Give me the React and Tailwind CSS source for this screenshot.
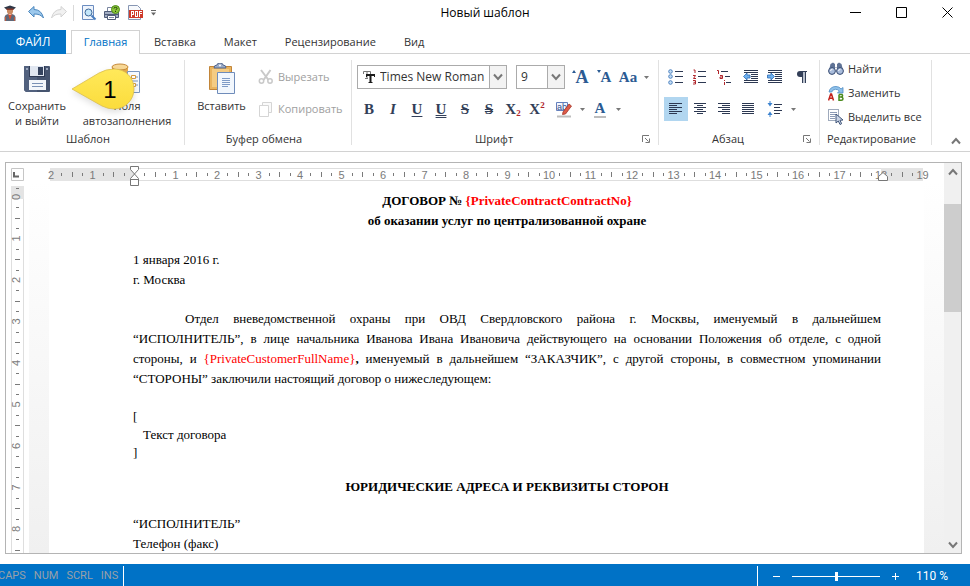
import React, { useState } from 'react';

const Svg = ({ size = 16, w, h, children, className = '' }) => (
  <svg width={w || size} height={h || size} viewBox={`0 0 ${w || size} ${h || size}`} fill="none" className={`shrink-0 ${className}`} aria-hidden="true">
    {children}
  </svg>
);

const Caret = () => (
  <Svg w={5} h={3}><path d="M0 0H5L2.5 3Z" fill="#777" /></Svg>
);

const Chevron = ({ up }) => (
  <Svg w={10} h={8}><path d={up ? 'M1 6.500L5 2L9 6.500' : 'M1 1.500L5 6L9 1.500'} stroke="#777" strokeWidth="2" /></Svg>
);

/* quick access toolbar */
const GraduateIcon = () => (
  <Svg>
    <path d="M2 2.500L8 0.500L14 2.500L11.500 4.500H4.500Z" fill="#2f3848" />
    <path d="M5 4H11V7Q10.500 9.500 8 9.500Q5.500 9.500 5 7Z" fill="#c98a63" />
    <path d="M4.500 3.500H11.500V5H4.500Z" fill="#8c3a2a" />
    <path d="M2.500 16V12Q3 9.500 6 9L8 11L10 9Q13 9.500 13.500 12V16Z" fill="#5f6878" />
    <path d="M6 9L8 15L10 9L8 10Z" fill="#d9502f" />
    <path d="M3.500 12V16M12.500 12V16" stroke="#c4593c" />
  </Svg>
);

const UndoIcon = () => (
  <Svg>
    <path d="M0.500 6.500L6 1.500V4.500Q13.500 4.500 15.500 13Q12.500 8.800 6 9V12Z" fill="#9cc8ec" stroke="#4a86bd" strokeLinejoin="round" />
  </Svg>
);

const RedoIcon = () => (
  <Svg>
    <path d="M15.500 6.500L10 1.500V4.500Q2.500 4.500 0.500 13Q3.500 8.800 10 9V12Z" fill="#f1f1f1" stroke="#d2d2d2" strokeLinejoin="round" />
  </Svg>
);

const PreviewIcon = () => (
  <Svg>
    <path d="M1.500 0.500H12.500V14.500H1.500Z" fill="#eef4fc" stroke="#6b8cc0" />
    <circle cx="7.500" cy="7.500" r="3.500" fill="#c4e6fa" stroke="#3d6798" />
    <path d="M10.500 10.500L14.500 14.500" stroke="#4a7fc0" strokeWidth="2" />
  </Svg>
);

const PrintIcon = () => (
  <Svg>
    <path d="M3.500 2.500H10.500V6.500H3.500Z" fill="#fff" stroke="#7a86a0" />
    <path d="M0.500 6.500H14.500V12.500H0.500Z" fill="#a3aec4" stroke="#4f5b78" />
    <path d="M1 9H14V10H1Z" fill="#4f5b78" />
    <path d="M3.500 10.500H11.500V14.500H3.500Z" fill="#fff" stroke="#4f5b78" />
    <path d="M5 12.500H10" stroke="#7f8ba8" />
    <circle cx="11.500" cy="4.500" r="4" fill="#8cc63a" stroke="#4d8a18" />
    <path d="M10 3.500Q10 2.300 11.500 2.300Q13 2.300 13 3.500Q13 4.300 11.500 5M11.500 6V7" stroke="#22420a" />
  </Svg>
);

const PdfIcon = () => (
  <Svg>
    <path d="M1.500 0.500H10.500L13.500 3.500V14.500H1.500Z" fill="#f7f9fc" stroke="#8796b3" />
    <path d="M2 5H16V13H2Z" fill="#cf3b2b" />
    <path d="M4.500 11.500V6.500H6.500V9.500H4.500M8.500 6.500V11.500H10.500V6.500ZM12.500 11.500V6.500H15M12.500 8.500H14.500" stroke="#fff" shapeRendering="crispEdges" />
  </Svg>
);

/* large ribbon icons */
const SaveIcon = () => (
  <Svg size={28}>
    <path d="M1 2Q1 1 2 1H26Q27 1 27 2V26Q27 27 26 27H3L1 25Z" fill="#46546f" />
    <path d="M1 2Q1 1 2 1H14V27H3L1 25Z" fill="#52617e" />
    <path d="M6 1H22V12H6Z" fill="#2f3b55" />
    <path d="M7 1H21V11H7Z" fill="#e1e7f1" />
    <path d="M15 2H20V10H15Z" fill="#36445f" />
    <path d="M6 15H23V25H6Z" fill="#f3f6fa" />
    <path d="M9 18.500H20M9 21.500H20" stroke="#7990b4" />
    <path d="M3 3H5V5H3ZM23 3H25V5H23Z" fill="#9aa6bc" />
  </Svg>
);

const FieldsIcon = () => (
  <Svg w={32} h={32}>
    <path d="M1 4V24Q1 27 9 27Q17 27 17 24V4Z" fill="#e5aa4c" />
    <path d="M1 4V24Q1 26 5 26.700V7Z" fill="#c98b30" />
    <ellipse cx="9" cy="4" rx="8" ry="3" fill="#f8d896" stroke="#c68a3b" />
    <path d="M16.500 8.500H28.500V29.500H16.500Z" fill="#f6fafe" stroke="#7c98c0" />
    <path d="M21 14H27M21 18H27M21 22H27" stroke="#7c98c0" />
    <path d="M20.500 12.500H24.500V15.500H20.500ZM20.500 20.500H24.500V23.500H20.500Z" fill="#fff" stroke="#d79c40" />
  </Svg>
);

const PasteIcon = () => (
  <Svg w={28} h={32}>
    <path d="M1.500 3.500H23.500V26.500H1.500Z" fill="#eab45e" stroke="#c28539" />
    <path d="M4 6H21V24H4Z" fill="#f5cc83" />
    <path d="M6 5Q6 2 9 2Q9 0 12 0Q15 0 15 2Q18 2 18 5Z" fill="#9aabc8" stroke="#54688f" />
    <circle cx="12" cy="2.500" r="1" fill="#fff" />
    <path d="M9.500 9.500H26.500V30.500H9.500Z" fill="#f2f7fd" stroke="#6f8cba" />
    <path d="M14 15.500H22M14 17.500H22M14 19.500H22M14 21.500H22M14 23.500H20" stroke="#7f9bc6" />
  </Svg>
);

/* small ribbon icons */
const CutIcon = () => (
  <Svg>
    <path d="M3 1L10.500 11M12.500 1L5.500 11" stroke="#c9c9c9" strokeWidth="2" />
    <circle cx="3.500" cy="12" r="2.200" stroke="#c9c9c9" strokeWidth="1.500" />
    <circle cx="12" cy="12" r="2.200" stroke="#c9c9c9" strokeWidth="1.500" />
  </Svg>
);

const CopyIcon = () => (
  <Svg>
    <path d="M4.500 1.500H13.500V11.500H4.500Z" fill="#fafafa" stroke="#d5d5d5" />
    <path d="M1.500 4.500H10.500V15.500H1.500Z" fill="#fff" stroke="#d5d5d5" />
  </Svg>
);

const FindIcon = () => (
  <Svg>
    <path d="M2.500 3L5 1.500L7 3V7H9V3L11 1.500L13.500 3L15 9H9V6.500H7V9H1Z" fill="#5f7396" />
    <circle cx="4" cy="10" r="3.400" fill="#a9bcdb" stroke="#34486f" />
    <circle cx="12" cy="10" r="3.400" fill="#a9bcdb" stroke="#34486f" />
    <path d="M2.500 10Q3 8.200 4.500 8.200M10.500 10Q11 8.200 12.500 8.200" stroke="#fff" />
  </Svg>
);

const ReplaceIcon = () => (
  <Svg>
    <path d="M1 7Q2 1.500 8 1.500Q11.500 1.500 13 4L15 2.500V8H9.500L11.300 6Q10 4.300 7.500 4.300Q4.500 4.300 3.800 7Z" fill="#8fc1ea" stroke="#4d8bc4" strokeWidth="0.800" />
    <path d="M0.500 15.500L2.700 9H3.500L5.500 15.500M1.500 13.200H4.800" stroke="#c3211b" strokeWidth="1.500" />
    <path d="M11 9.500H13.500Q14.800 9.500 14.500 11Q14.300 12 13 12H11M13 12Q15 12.200 15 13.700Q15 15.200 13.300 15.200H11V9.500" stroke="#4a8a1d" strokeWidth="1.500" />
  </Svg>
);

const SelectAllIcon = () => (
  <Svg>
    <path d="M0.500 0.500H10.500V11.500H0.500Z" stroke="#3f5478" strokeDasharray="1 1" />
    <path d="M2 3.500H9M2 5.500H9M2 7.500H7M2 9.500H7" stroke="#8d9bb5" />
    <path d="M8 5V14L10.300 12L12 15.500L13.600 14.700L12 11.300L15 11Z" fill="#c9d3e4" stroke="#3f5478" />
  </Svg>
);

const TrueTypeIcon = () => (
  <Svg w={14} h={14}>
    <path d="M1.500 4V1.500H8.500V4M5 1.500V9M3 8.500H6" stroke="#777" />
    <path d="M4.500 7V4.500H12.500V7M6.500 12.500H10.500" stroke="#1b1b1b" />
    <path d="M4 4H13V6H4ZM7.500 4H9.500V13H7.500Z" fill="#1b1b1b" />
  </Svg>
);

const EraseIcon = () => (
  <Svg w={16} h={17}>
    <path d="M0.500 1.500H11.500V9.500H0.500Z" fill="#f3f7ff" stroke="#6480bd" />
    <text x="1" y="8.500" fontSize="9" fontFamily="Liberation Sans" fill="#334e8c">ab</text>
    <path d="M7 11L13 3L15.500 5L9.500 13L6.500 13.500Z" fill="#de5b48" stroke="#a33528" strokeWidth="0.800" />
    <path d="M1 15.500H15" stroke="#bdbdbd" strokeWidth="2" />
  </Svg>
);

const BulletsIcon = () => (
  <Svg>
    {[2.5, 7.5, 13.5].map(y => (
      <g key={y}>
        <circle cx="2.500" cy={y} r="1.800" fill="#c5def5" stroke="#4d82c0" />
        <path d={`M7 ${y}H15`} stroke="#2c3852" />
      </g>
    ))}
  </Svg>
);

const NumbersIcon = () => (
  <Svg>
    <path d="M1.500 1H3V4M1 6.500H3.500L1.500 9.500H4M1 11.500H3.500V15H1M3 13.300H1.500" stroke="#b0252b" />
    <path d="M6 2.500H14M6 7.500H14M6 13.500H14" stroke="#2c3852" />
  </Svg>
);

const MultilevelIcon = () => (
  <Svg>
    <path d="M1 1.500H2.500V5M4 6.500H6.500V9.500H4V8H6.500M8.500 11V12M8.500 13V16" stroke="#b0252b" />
    <path d="M5 2.500H12M9 7.500H14M10 13.500H15" stroke="#2c3852" />
  </Svg>
);

const IndentIcon = ({ flip }) => (
  <Svg>
    <path d="M1 1.500H15M1 3.500H15M8 5.500H15M8 7.500H15M8 9.500H15M1 11.500H15M1 13.500H15" stroke="#2c3852" />
    <path d="M0 5H8V10H0Z" fill="#fff" />
    <path d={flip ? 'M7.500 7.500L4 4V6H0.500V9H4V11Z' : 'M0.500 7.500L4 4V6H7V9H4V11Z'} fill="#6db0ef" stroke="#2f6cb5" strokeWidth="0.800" />
  </Svg>
);

const alignPaths = {
  left: 'M1 2.500H14M1 4.500H9M1 6.500H14M1 8.500H9M1 10.500H14M1 12.500H9',
  center: 'M2 2.500H14M5 4.500H11M2 6.500H14M5 8.500H11M2 10.500H14M5 12.500H11',
  right: 'M2 2.500H14M6 4.500H14M2 6.500H14M6 8.500H14M2 10.500H14M6 12.500H14',
  justify: 'M2 2.500H14M2 4.500H14M2 6.500H14M2 8.500H14M2 10.500H14M2 12.500H14',
};

const AlignIcon = ({ type }) => (
  <Svg><path d={alignPaths[type]} stroke="#2c3852" /></Svg>
);

const SpacingIcon = () => (
  <Svg>
    <path d="M3 5.500L5.500 2H0.500ZM3 10.500L5.500 14H0.500Z" fill="#3d83cf" />
    <path d="M3 0V3M3 13V16" stroke="#3d83cf" />
    <path d="M7 3.500H15M7 6.500H13M7 9.500H15M7 12.500H13" stroke="#2c3852" />
  </Svg>
);

const PilcrowIcon = () => (
  <Svg>
    <path d="M8.500 3V14M11.500 3V14M6 2.500H13" stroke="#333f58" />
    <path d="M8.500 2H6Q3 2.200 3 5Q3 8 6 8H8.500Z" fill="#333f58" />
    <path d="M9 3H11V14H9Z" fill="#b9c0cc" />
  </Svg>
);

const LauncherIcon = () => (
  <Svg w={8} h={8}>
    <path d="M0.500 7V0.500H7M3 3L6.500 6.500M7.500 3.500V7.500H3.500" stroke="#777" />
  </Svg>
);

const IconButton = ({ label, active, className = '', children }) => (
  <button aria-label={label} className={`flex h-6 w-6 shrink-0 items-center justify-center ${active ? 'bg-[#b1d6f0]' : ''} ${className}`}>
    {children}
  </button>
);

const CaretButton = ({ label }) => (
  <button aria-label={label} className="flex h-6 w-3 shrink-0 items-center justify-center"><Caret /></button>
);

const TextButton = ({ icon, text, disabled }) => (
  <button disabled={disabled} className={`flex h-6 items-center gap-1 whitespace-nowrap ${disabled ? 'text-[#a0a0a0]' : ''}`}>
    {icon}{text}
  </button>
);

const LargeButton = ({ icon, lines, className }) => (
  <button className={`flex shrink-0 flex-col items-center leading-[15px] ${className}`}>
    <span className="flex h-[38px] items-center justify-center">{icon}</span>
    {lines.map(line => <span key={line} className="whitespace-nowrap">{line}</span>)}
  </button>
);

const Group = ({ title, launcher, className, children }) => (
  <section className={`flex h-[85px] shrink-0 flex-col border-r border-[#e1e1e1] ${className}`}>
    <div className="h-[73px] shrink-0">{children}</div>
    <div className="flex h-3 items-center">
      <h2 className="flex-1 text-center leading-4">{title}</h2>
      <div className="flex w-[22px] justify-end pr-2 empty:w-1">
        {launcher && <button aria-label={launcher}><LauncherIcon /></button>}
      </div>
    </div>
  </section>
);

const Combo = ({ label, options, icon, className }) => (
  <span className={`relative flex h-6 shrink-0 items-center border border-[#ababab] bg-white text-[12px] ${className}`}>
    {icon && <span className="pl-1">{icon}</span>}
    <select aria-label={label} className="h-full min-w-0 flex-1 appearance-none bg-transparent px-1 outline-none">
      {options.map(o => <option key={o}>{o}</option>)}
    </select>
    <span className="pointer-events-none flex h-full w-[17px] items-center justify-center border-l border-[#ababab] bg-[#f3f3f3]"><Chevron /></span>
  </span>
);

const glyph = "font-['Liberation_Serif',serif] text-[15px] leading-none font-bold text-[#333f58]";
const blueGlyph = "font-['Liberation_Serif',serif] leading-none font-bold text-[#2b5b93]";
const scriptMark = "font-['Liberation_Serif',serif] text-[9px] leading-none font-bold text-[#b0252b]";

const CM = 41.5;
const range = (from, to) => Array.from({ length: to - from + 1 }, (_, i) => from + i);

const HorizontalRuler = () => (
  <svg width="875" height="18" className="shrink-0 overflow-visible" fontFamily="Liberation Sans, sans-serif" fontSize="11" fill="#7a7a7a">
    <path d="M1 0H874V13H1Z" fill="#fff" />
    <path d="M85 0.500H832M85 12.500H832" stroke="#dedede" />
    <path d="M1 0H85V13H1ZM832 0H874V13H832Z" fill="#e4e4e4" />
    {range(-2, 19).map(n => {
      const x = 85 + n * CM;
      return (
        <g key={n}>
          {n !== 0 && <text x={x} y="11" textAnchor="middle">{Math.abs(n)}</text>}
          {n < 19 && [0.25, 0.5, 0.75].map(q => (
            <rect key={q} x={Math.round(x + q * CM)} y={q === 0.5 ? 4 : 5} width="1" height={q === 0.5 ? 5 : 3} />
          ))}
        </g>
      );
    })}
    <g fill="#fff" stroke="#777">
      <path d="M81.500 -1.500H89.500V1.500L85.500 6L89.500 10.500V17.500H81.500V10.500L85.500 6L81.500 1.500ZM81.500 11.500H89.500" />
      <path d="M829.500 12.500V8.500L834 4.500L838.500 8.500V12.500Z" />
    </g>
  </svg>
);

const VerticalRuler = () => {
  // whole centimetres that fit between the ribbon and the status bar
  const last = Math.max(0, Math.floor((window.innerHeight - 240) / CM));
  return (
    <svg width="13" height="2000" className="shrink-0" fontFamily="Liberation Sans, sans-serif" fontSize="11" fill="#7a7a7a">
      <path d="M0.500 13V2000M12.500 13V2000" stroke="#dedede" />
      <path d="M0 0H13V13H0Z" fill="#e4e4e4" />
      <rect x="5" y="2" width="3" height="1" />
      {range(0, last).map(n => {
        const y = 11 + n * CM;
        return (
          <g key={n}>
            <text textAnchor="middle" transform={`translate(9 ${y}) rotate(-90)`}>{n}</text>
            {[0.25, 0.5, 0.75].map(q => (
              <rect key={q} x={q === 0.5 ? 4 : 5} y={Math.round(y + q * CM)} width={q === 0.5 ? 5 : 3} height="1" />
            ))}
          </g>
        );
      })}
    </svg>
  );
};

const Callout = () => (
  <div className="pointer-events-none absolute top-[11px] left-[68px] h-[52px] w-[72px]">
    <svg width="72" height="52" className="absolute drop-shadow-md" aria-hidden="true">
      <defs>
        <linearGradient id="callout" x1="0" y1="0" x2="0" y2="1">
          <stop offset="0" stopColor="#ffe95a" />
          <stop offset="1" stopColor="#fbdc3c" />
        </linearGradient>
      </defs>
      <path d="M4 24L31 8Q38 4 46 4C58 4 66 13 66 24C66 35 57 44 46 44Q40 44 34 41Z" fill="url(#callout)" stroke="#d9bd4e" strokeWidth="0.800" strokeLinejoin="round" />
    </svg>
    <span className="relative flex h-[50px] items-center justify-center pl-3 font-['Liberation_Sans',sans-serif] text-2xl text-black">1</span>
  </div>
);

const tabs = ['Вставка', 'Макет', 'Рецензирование', 'Вид'];

const TitleBar = () => (
  <header className="grid h-[30px] shrink-0 grid-cols-[1fr_auto_1fr] items-start">
    <div className="flex h-[26px] items-center pl-[2px]">
      <GraduateIcon />
      <button aria-label="Отменить" className="ml-[10px]"><UndoIcon /></button>
      <button aria-label="Вернуть" className="ml-[7px]"><RedoIcon /></button>
      <span className="ml-[6px] h-4 w-px bg-[#d9d9d9]" />
      <button aria-label="Просмотр" className="ml-[7px]"><PreviewIcon /></button>
      <button aria-label="Печать" className="ml-[7px]"><PrintIcon /></button>
      <button aria-label="PDF" className="ml-[7px]"><PdfIcon /></button>
      <button aria-label="Настройка панели" className="ml-2">
        <Svg w={5} h={6}><path d="M0 0.500H5" stroke="#666" /><path d="M0 2.500H5L2.500 5.500Z" fill="#666" /></Svg>
      </button>
    </div>
    <h1 className="text-[12px] leading-[26px] text-black">Новый шаблон</h1>
    <div className="flex h-[25px] justify-end">
      <button aria-label="Свернуть" className="flex w-[46px] items-center justify-center"><Svg size={11}><path d="M0 5.500H11" stroke="#000" /></Svg></button>
      <button aria-label="Развернуть" className="flex w-[46px] items-center justify-center"><Svg size={11}><path d="M0.500 0.500H10.500V10.500H0.500Z" stroke="#000" /></Svg></button>
      <button aria-label="Закрыть" className="flex w-[46px] items-center justify-center"><Svg size={11}><path d="M0.500 0.500L10.500 10.500M10.500 0.500L0.500 10.500" stroke="#000" /></Svg></button>
    </div>
  </header>
);

const Ribbon = () => (
  <div className="relative flex h-[98px] shrink-0 border-b border-[#d2d2d2] pt-[6px]">
    <Group title="Шаблон" className="w-[185px]">
      <div className="flex">
        <LargeButton icon={<SaveIcon />} lines={['Сохранить', 'и выйти']} className="w-[74px]" />
        <LargeButton icon={<FieldsIcon />} lines={['Поля', 'автозаполнения']} className="w-[106px]" />
      </div>
    </Group>
    <Group title="Буфер обмена" className="w-[167px]">
      <div className="flex">
        <LargeButton icon={<PasteIcon />} lines={['Вставить']} className="w-[73px]" />
        <div className="flex flex-col gap-2 pt-[5px]">
          <TextButton icon={<CutIcon />} text="Вырезать" disabled />
          <TextButton icon={<CopyIcon />} text="Копировать" disabled />
        </div>
      </div>
    </Group>
    <Group title="Шрифт" launcher="Параметры шрифта" className="w-[307px]">
      <div className="flex flex-col gap-2 pt-[5px] pl-[5px]">
        <div className="flex">
          <Combo label="Шрифт" options={['Times New Roman', 'Arial']} icon={<TrueTypeIcon />} className="w-[150px]" />
          <Combo label="Размер" options={['9', '10', '11', '12']} className="mr-[3px] ml-[9px] w-[49px]" />
          <IconButton label="Увеличить размер"><Svg w={4} h={3} className="mb-3"><path d="M0 3L2 0L4 3Z" fill="#2b5b93" /></Svg><span className={`${blueGlyph} text-lg`}>A</span></IconButton>
          <IconButton label="Уменьшить размер"><Svg w={4} h={3} className="mb-3"><path d="M0 0H4L2 3Z" fill="#2b5b93" /></Svg><span className={`${blueGlyph} text-[15px]`}>A</span></IconButton>
          <IconButton label="Регистр"><span className={`${blueGlyph} text-[15px]`}>Aa</span></IconButton>
          <CaretButton label="Варианты регистра" />
        </div>
        <div className="flex">
          <IconButton label="Полужирный"><span className={glyph}>B</span></IconButton>
          <IconButton label="Курсив"><span className={`${glyph} italic`}>I</span></IconButton>
          <IconButton label="Подчёркнутый"><span className={`${glyph} underline underline-offset-2`}>U</span></IconButton>
          <IconButton label="Двойное подчёркивание"><span className={`${glyph} underline decoration-double underline-offset-1`}>U</span></IconButton>
          <IconButton label="Зачёркнутый"><span className={`${glyph} line-through`}>S</span></IconButton>
          <IconButton label="Двойное зачёркивание"><span className={`${glyph} line-through decoration-double`}>S</span></IconButton>
          <IconButton label="Подстрочный"><span className={glyph}>X</span><span className={`${scriptMark} mt-2`}>2</span></IconButton>
          <IconButton label="Надстрочный"><span className={glyph}>X</span><span className={`${scriptMark} mb-2`}>2</span></IconButton>
          <IconButton label="Цвет выделения" className="ml-[3px]"><EraseIcon /></IconButton>
          <CaretButton label="Варианты выделения" />
          <IconButton label="Цвет текста"><span className={`${blueGlyph} border-b-2 border-[#bdbdbd] px-px text-[15px]`}>A</span></IconButton>
          <CaretButton label="Варианты цвета текста" />
        </div>
      </div>
    </Group>
    <Group title="Абзац" launcher="Параметры абзаца" className="w-[161px]">
      <div className="flex flex-col gap-2 pt-[5px] pl-[5px]">
        <div className="flex">
          <IconButton label="Маркеры"><BulletsIcon /></IconButton>
          <IconButton label="Нумерация"><NumbersIcon /></IconButton>
          <IconButton label="Многоуровневый список"><MultilevelIcon /></IconButton>
          <IconButton label="Уменьшить отступ" className="ml-[3px]"><IndentIcon /></IconButton>
          <IconButton label="Увеличить отступ"><IndentIcon flip /></IconButton>
          <IconButton label="Непечатаемые знаки" className="ml-[3px]"><PilcrowIcon /></IconButton>
        </div>
        <div className="flex">
          <IconButton label="По левому краю" active><AlignIcon type="left" /></IconButton>
          <IconButton label="По центру"><AlignIcon type="center" /></IconButton>
          <IconButton label="По правому краю"><AlignIcon type="right" /></IconButton>
          <IconButton label="По ширине"><AlignIcon type="justify" /></IconButton>
          <IconButton label="Интервал" className="ml-[3px]"><SpacingIcon /></IconButton>
          <CaretButton label="Варианты интервала" />
        </div>
      </div>
    </Group>
    <Group title="Редактирование" className="w-[112px]">
      <div className="-mt-[3px] flex flex-col pl-2">
        <TextButton icon={<FindIcon />} text="Найти" />
        <TextButton icon={<ReplaceIcon />} text="Заменить" />
        <TextButton icon={<SelectAllIcon />} text="Выделить все" />
      </div>
    </Group>
    <button aria-label="Свернуть ленту" className="mb-[6px] ml-auto self-end pr-[9px]"><Chevron up /></button>
    <Callout />
  </div>
);

const JustifiedLine = ({ indent, children }) => (
  <span className={`block whitespace-nowrap [text-align-last:justify] ${indent ? 'pl-[52px]' : ''}`}>{children}</span>
);

const Document = () => (
  <article className="w-[875px] shrink-0 bg-white pt-[10px] pr-[43px] pl-[84px] font-['Liberation_Serif',serif] text-[13px] leading-5 text-black">
    <div className="text-center font-bold">
      <p>ДОГОВОР № <span className="text-[#ff0000]">{'{PrivateContractContractNo}'}</span></p>
      <p>об оказании услуг по централизованной охране</p>
    </div>
    <p className="mt-[19px]">1 января 2016 г.</p>
    <p>г. Москва</p>
    <p className="mt-[19px]">
      <JustifiedLine indent>Отдел вневедомственной охраны при ОВД Свердловского района г. Москвы, именуемый в дальнейшем</JustifiedLine>
      <JustifiedLine>“ИСПОЛНИТЕЛЬ”, в лице начальника Иванова Ивана Ивановича действующего на основании Положения об отделе, с одной</JustifiedLine>
      <JustifiedLine>стороны, и <span className="text-[#ff0000]">{'{PrivateCustomerFullName}'}</span><b>,</b> именуемый в дальнейшем “ЗАКАЗЧИК”, с другой стороны, в совместном упоминании</JustifiedLine>
      <span className="block">“СТОРОНЫ” заключили настоящий договор о нижеследующем:</span>
    </p>
    <div className="mt-[19px] leading-[18px]">
      <p>[</p>
      <p className="pl-[10px]">Текст договора</p>
      <p>]</p>
    </div>
    <p className="mt-[15px] text-center font-bold">ЮРИДИЧЕСКИЕ АДРЕСА И РЕКВИЗИТЫ СТОРОН</p>
    <p className="mt-[17px]">“ИСПОЛНИТЕЛЬ”</p>
    <p>Телефон (факс)</p>
  </article>
);

const StatusBar = () => {
  const [zoom, setZoom] = useState(110);
  return (
    <footer className="flex h-[22px] shrink-0 items-center bg-[#0072c6] pt-[2px] font-['Roboto',sans-serif] text-white">
      <div className="-ml-[2px] flex h-full items-center gap-2 border-r border-white pr-[5px] text-[11px] text-[#9aa0a6]">
        <span>CAPS</span><span>NUM</span><span>SCRL</span><span>INS</span>
      </div>
      <div className="ml-auto flex h-full items-center border-l border-white pr-[22px] pl-[14px] text-[12px]">
        <button aria-label="Уменьшить масштаб" className="w-[9px]"><Svg size={9}><path d="M1 4.500H8" stroke="#fff" /></Svg></button>
        <input
          type="range"
          min="20"
          max="200"
          value={zoom}
          onChange={e => setZoom(Number(e.target.value))}
          aria-label="Масштаб"
          className="mx-[11px] h-[9px] w-[88px] appearance-none bg-[linear-gradient(#fff,#fff)] bg-[length:100%_1px] bg-center bg-no-repeat [&::-webkit-slider-thumb]:h-[9px] [&::-webkit-slider-thumb]:w-[3px] [&::-webkit-slider-thumb]:appearance-none [&::-webkit-slider-thumb]:bg-white"
        />
        <button aria-label="Увеличить масштаб" className="w-[9px]"><Svg size={9}><path d="M1 4.500H8M4.500 1V8" stroke="#fff" /></Svg></button>
        <output className="ml-4">{zoom} %</output>
      </div>
    </footer>
  );
};

export default function App() {
  return (
    <div className="flex h-screen flex-col overflow-hidden bg-white font-['Open_Sans',sans-serif] text-[11px] text-[#333]">
      <TitleBar />
      <nav className="flex h-6 shrink-0 items-stretch border-b border-[#d2d2d2]">
        <button className="-mb-px w-[66px] bg-[#0072c6] text-[12px] text-white">ФАЙЛ</button>
        <button className="-mb-px ml-[5px] w-[69px] border border-b-0 border-[#d2d2d2] bg-white text-[#0072c6]">Главная</button>
        <div className="ml-[14px] flex gap-7 pt-[2px]">
          {tabs.map(t => <button key={t}>{t}</button>)}
        </div>
      </nav>
      <Ribbon />
      <main className="mt-[10px] mr-2 mb-[10px] ml-[5px] flex min-h-0 flex-1 border border-[#b4b4b4]">
        <div className="flex min-w-0 flex-1 flex-col">
          <div className="relative z-10 flex h-[18px] shrink-0 pt-[5px]">
            <div className="w-[23px] shrink-0 pl-[5px]">
              <Svg size={13}><path d="M0.500 0.500H12.500V12.500H0.500Z" stroke="#c6c6c6" /><path d="M3 4V8.500H8" stroke="#666" strokeWidth="2" /></Svg>
            </div>
            <div className="flex min-w-0 flex-1 justify-center"><HorizontalRuler /></div>
          </div>
          <div className="flex min-h-0 flex-1">
            <div className="w-[23px] shrink-0 overflow-hidden pt-[5px] pl-[5px]"><VerticalRuler /></div>
            <div className="flex min-w-0 flex-1 justify-center overflow-hidden bg-linear-to-b from-white to-[#f0f0f0]"><Document /></div>
          </div>
        </div>
        <div className="flex w-[17px] shrink-0 flex-col items-center bg-[#f0f0f0]">
          <button aria-label="Вверх" className="flex h-[17px] items-center"><Chevron up /></button>
          <div className="w-full flex-1 pt-6"><div className="h-[108px] bg-[#cdcdcd]" /></div>
          <button aria-label="Вниз" className="flex h-[17px] items-center"><Chevron /></button>
        </div>
      </main>
      <StatusBar />
    </div>
  );
}
